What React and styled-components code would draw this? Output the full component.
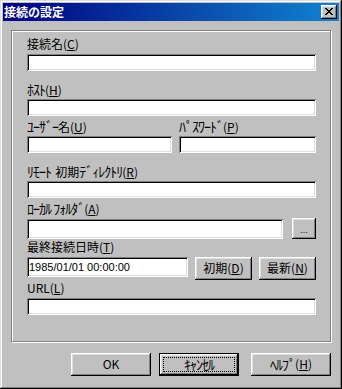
import React from "react";
import styled, { createGlobalStyle } from "styled-components";

const GlobalStyle = createGlobalStyle`
  * {
    box-sizing: border-box;
  }
  body {
    margin: 0;
    background: #c0c0c0;
    color: #000;
    font-family: "Noto Sans CJK JP", "Liberation Sans", sans-serif;
    font-size: 12px;
  }
`;

function Mn({ children }) {
  return <Under>{children}</Under>;
}

function App() {
  return (
    <>
      <GlobalStyle />
      <Window>
        <TitleBar>
          <Title>接続の設定</Title>
          <CloseButton>
            <svg width="8" height="7" viewBox="0 0 8 7" shapeRendering="crispEdges">
              <path
                d="M0 0h2v1h-2z M6 0h2v1h-2z M1 1h2v1h-2z M5 1h2v1h-2z M2 2h4v1h-4z M3 3h2v1h-2z M2 4h4v1h-4z M1 5h2v1h-2z M5 5h2v1h-2z M0 6h2v1h-2z M6 6h2v1h-2z"
                fill="#000"
              />
            </svg>
          </CloseButton>
        </TitleBar>

        <Body>
          <Group>
            <Field>
              <Label>
                接続名(<Mn>C</Mn>)
              </Label>
              <TextBox />
            </Field>

            <Field $mt={12}>
              <Label>
                <Kana>ﾎｽﾄ</Kana>(<Mn>H</Mn>)
              </Label>
              <TextBox />
            </Field>

            <Pair>
              <Field>
                <Label>
                  <Kana>ﾕｰｻﾞｰ</Kana>名(<Mn>U</Mn>)
                </Label>
                <TextBox />
              </Field>
              <Field>
                <Label>
                  <Kana>ﾊﾟｽﾜｰﾄﾞ</Kana>(<Mn>P</Mn>)
                </Label>
                <TextBox type="password" />
              </Field>
            </Pair>

            <Field $mt={12}>
              <Label>
                <Kana>ﾘﾓｰﾄ  </Kana>初期<Kana>ﾃﾞｨﾚｸﾄﾘ</Kana>(<Mn>R</Mn>)
              </Label>
              <TextBox />
            </Field>

            <Field $mt={4}>
              <Label>
                <Kana>ﾛｰｶﾙ ﾌｫﾙﾀﾞ</Kana>(<Mn>A</Mn>)
              </Label>
              <InlineRow $gap={9} $align="center">
                <TextBox />
                <Button $w={24} $h={21}>
                  <Dots>...</Dots>
                </Button>
              </InlineRow>
            </Field>

            <Field $mt={2}>
              <Label>
                最終接続日時(<Mn>T</Mn>)
              </Label>
              <InlineRow $gap={7} $align="flex-start">
                <DateBox defaultValue="1985/01/01 00:00:00" />
                <Button $w={57} $h={23}>
                  初期(<Mn>D</Mn>)
                </Button>
                <Button $w={57} $h={23}>
                  最新(<Mn>N</Mn>)
                </Button>
              </InlineRow>
            </Field>

            <Field $mt={2}>
              <Label>
                URL(<Mn>L</Mn>)
              </Label>
              <TextBox />
            </Field>
          </Group>

          <Actions>
            <Button $w={80} $h={23}>
              OK
            </Button>
            <DefaultButton>
              <FocusRing>
                <Kana>ｷｬﾝｾﾙ</Kana>
              </FocusRing>
            </DefaultButton>
            <Button $w={80} $h={23}>
              <Kana>ﾍﾙﾌﾟ</Kana>(<Mn>H</Mn>)
            </Button>
          </Actions>
        </Body>
      </Window>
    </>
  );
}

export default App;

const Window = styled.div`
  width: 342px;
  height: 389px;
  padding: 3px;
  background: #c0c0c0;
  display: flex;
  flex-direction: column;
  box-shadow: inset -1px -1px #000, inset 1px 1px #dfdfdf,
    inset -2px -2px #808080, inset 2px 2px #fff;
`;

const TitleBar = styled.div`
  height: 18px;
  display: flex;
  align-items: center;
  justify-content: space-between;
  padding: 0 2px 0 1px;
  background: linear-gradient(to right, #000080, #1084d0);
`;

const Title = styled.span`
  color: #fff;
  font-weight: bold;
  font-size: 12px;
  line-height: 12px;
`;

const CloseButton = styled.div`
  width: 16px;
  height: 14px;
  display: flex;
  align-items: center;
  justify-content: center;
  padding: 0 1px 1px 0;
  background: #c0c0c0;
  box-shadow: inset -1px -1px #000, inset 1px 1px #fff,
    inset -2px -2px #808080, inset 2px 2px #dfdfdf;
`;

const Body = styled.div`
  display: flex;
  flex-direction: column;
  padding: 9px 8px 0 8px;
`;

const Group = styled.div`
  height: 312px;
  display: flex;
  flex-direction: column;
  padding: 7px 14px 11px 15px;
  border: 1px solid #808080;
  box-shadow: 1px 1px 0 #fff, inset 1px 1px 0 #fff;
`;

const Field = styled.div`
  display: flex;
  flex-direction: column;
  min-width: 0;
  margin-top: ${(p) => p.$mt || 0}px;
`;

const Pair = styled.div`
  display: grid;
  grid-template-columns: 145px 137px;
  column-gap: 7px;
  margin-top: 4px;
`;

const Label = styled.div`
  height: 16px;
  line-height: 12px;
  white-space: pre;
`;

const Kana = styled.span`
  font-size: 14px;
  letter-spacing: -1px;
  line-height: 12px;
  white-space: pre;
`;

const Under = styled.u`
  text-decoration-thickness: 1px;
  text-underline-offset: 1px;
`;

const TextBox = styled.input`
  display: block;
  height: 20px;
  width: 100%;
  flex: 1;
  min-width: 0;
  margin: 0;
  padding: 0 0 0 1px;
  border: none;
  outline: none;
  background: #fff;
  color: #000;
  font: 12px "Noto Sans CJK JP", sans-serif;
  box-shadow: inset 1px 1px #808080, inset -1px -1px #fff,
    inset 2px 2px #000, inset -2px -2px #dfdfdf;
`;

const DateBox = styled(TextBox)`
  && {
    width: 161px;
    flex: none;
    padding-left: 2px;
    font: 11px "Liberation Sans", Arial, sans-serif;
    letter-spacing: 0;
  }
`;

const InlineRow = styled.div`
  display: flex;
  align-items: ${(p) => p.$align};
  gap: ${(p) => p.$gap}px;
`;

const Button = styled.div`
  width: ${(p) => p.$w}px;
  height: ${(p) => p.$h}px;
  flex: none;
  display: flex;
  align-items: center;
  justify-content: center;
  padding-bottom: 1px;
  background: #c0c0c0;
  line-height: 12px;
  white-space: nowrap;
  box-shadow: inset -1px -1px #000, inset 1px 1px #fff,
    inset -2px -2px #808080, inset 2px 2px #dfdfdf;
`;

const Dots = styled.span`
  font-family: "Liberation Sans", Arial, sans-serif;
  font-size: 9px;
  padding-top: 3px;
`;

const DefaultButton = styled.div`
  width: 80px;
  height: 23px;
  display: flex;
  padding: 4px;
  margin: 0 12px 0 8px;
  background: #c0c0c0;
  box-shadow: inset 0 0 0 1px #000, inset -2px -2px #000, inset 2px 2px #fff,
    inset -3px -3px #808080, inset 3px 3px #dfdfdf;
`;

const FocusRing = styled.div`
  flex: 1;
  display: flex;
  align-items: center;
  justify-content: center;
  padding-bottom: 1px;
  line-height: 12px;
  border: 1px dotted #000;
`;

const Actions = styled.div`
  display: flex;
  justify-content: flex-end;
  margin-top: 11px;
`;
